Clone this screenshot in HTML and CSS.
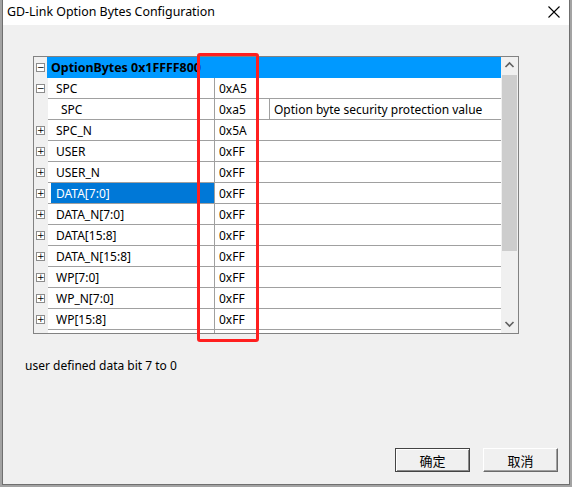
FILE: index.html
```html
<!DOCTYPE html>
<html>
<head>
<meta charset="utf-8">
<title>GD-Link Option Bytes Configuration</title>
<link rel="stylesheet" href="styles.css">
</head>
<body>

<div class="window">
  <div class="titlebar">
    <span class="title">GD-Link Option Bytes Configuration</span>
    <svg class="close" width="12" height="12" viewBox="0 0 12 12">
      <path d="M0.5 0.5 L11.5 11.5 M11.5 0.5 L0.5 11.5" stroke="#000" stroke-width="1.1" fill="none"/>
    </svg>
  </div>

  <div class="client">
    <div class="grid">
      <div class="rows">
        <div class="row">
          <div class="gut"><span class="box">&minus;</span></div>
          <div class="cells head">OptionBytes 0x1FFFF800</div>
        </div>
        <div class="row">
          <div class="gut"><span class="box">&minus;</span></div>
          <div class="cells">
            <div class="name">SPC</div>
            <div class="val wide">0xA5</div>
          </div>
        </div>
        <div class="row">
          <div class="gut"></div>
          <div class="cells">
            <div class="name sub">SPC</div>
            <div class="val">0xa5</div>
            <div class="desc">Option byte security protection value</div>
          </div>
        </div>
        <div class="row">
          <div class="gut"><span class="box">+</span></div>
          <div class="cells"><div class="name">SPC_N</div><div class="val wide">0x5A</div></div>
        </div>
        <div class="row">
          <div class="gut"><span class="box">+</span></div>
          <div class="cells"><div class="name">USER</div><div class="val wide">0xFF</div></div>
        </div>
        <div class="row">
          <div class="gut"><span class="box">+</span></div>
          <div class="cells"><div class="name">USER_N</div><div class="val wide">0xFF</div></div>
        </div>
        <div class="row">
          <div class="gut"><span class="box">+</span></div>
          <div class="cells"><div class="name selected">DATA[7:0]</div><div class="val wide">0xFF</div></div>
        </div>
        <div class="row">
          <div class="gut"><span class="box">+</span></div>
          <div class="cells"><div class="name">DATA_N[7:0]</div><div class="val wide">0xFF</div></div>
        </div>
        <div class="row">
          <div class="gut"><span class="box">+</span></div>
          <div class="cells"><div class="name">DATA[15:8]</div><div class="val wide">0xFF</div></div>
        </div>
        <div class="row">
          <div class="gut"><span class="box">+</span></div>
          <div class="cells"><div class="name">DATA_N[15:8]</div><div class="val wide">0xFF</div></div>
        </div>
        <div class="row">
          <div class="gut"><span class="box">+</span></div>
          <div class="cells"><div class="name">WP[7:0]</div><div class="val wide">0xFF</div></div>
        </div>
        <div class="row">
          <div class="gut"><span class="box">+</span></div>
          <div class="cells"><div class="name">WP_N[7:0]</div><div class="val wide">0xFF</div></div>
        </div>
        <div class="row">
          <div class="gut"><span class="box">+</span></div>
          <div class="cells"><div class="name">WP[15:8]</div><div class="val wide">0xFF</div></div>
        </div>
        <!-- next row, scrolled out of view -->
        <div class="row">
          <div class="gut"></div>
          <div class="cells"><div class="name"></div><div class="val wide"></div></div>
        </div>
      </div>
      <div class="scrollbar">
        <svg class="arrow" width="17" height="17" viewBox="0 0 17 17">
          <path d="M4.5 10 L8.5 6 L12.5 10" stroke="#606060" stroke-width="1.6" fill="none"/>
        </svg>
        <div class="track"><div class="thumb"></div></div>
        <svg class="arrow" width="17" height="17" viewBox="0 0 17 17">
          <path d="M4.5 6 L8.5 10 L12.5 6" stroke="#606060" stroke-width="1.6" fill="none"/>
        </svg>
      </div>
    </div>

    <!-- annotation drawn over the value column -->
    <div class="mark"></div>

    <p class="info">user defined data bit 7 to 0</p>

    <div class="buttons">
      <button class="btn default">确定</button>
      <button class="btn">取消</button>
    </div>
  </div>
</div>

</body>
</html>
```

FILE: styles.css
```css
* {box-sizing: border-box;}
body {
    margin: 0;
    background: #a3a3a3;
    font-family: "Noto Sans", "Noto Sans CJK SC", sans-serif;
    font-size: 12px;
    color: #000;
}

.window {
    margin-left: 2px;
    width: 568px;
    height: 485px;
    border: 1px solid #6f6f6f;
    border-top: none;
    background: #f0f0f0;
    display: flex;
    flex-direction: column;
}

.titlebar {
    height: 25px;
    background: #fff;
    display: flex;
    align-items: center;
    padding-left: 4px;
    padding-right: 9px;
}

.title {
    flex: 1;
    font-size: 12.4px;
    padding-bottom: 2px;
}

.close {
    margin-top: -2px;
}

.client {
    flex: 1;
    position: relative;
    padding: 31px 0 0 30px;
    display: flex;
    flex-direction: column;
}

/* property grid */
.grid {
    width: 486px;
    height: 278px;
    border: 1px solid #828282;
    background: #fff;
    display: flex;
}

.rows {
    flex: 1;
    overflow: hidden;
}

.row {
    display: flex;
    height: 21px;
}

.gut {
    width: 14px;
    background: #f0f0f0;
    display: flex;
    align-items: center;
    padding-left: 2px;
    padding-bottom: 1px;
}

.box {
    width: 9px;
    height: 9px;
    border: 1px solid #8c8c8c;
    background: #fff;
    font-family: "DejaVu Sans", sans-serif;
    font-size: 9px;
    line-height: 7px;
    text-align: center;
    overflow: hidden;
}

.cells {
    flex: 1;
    display: flex;
    border-bottom: 1px solid #a0a0a0;
    padding-left: 3px;
    line-height: 19px;
}

.cells.head {
    background: #0099ff;
    border-bottom-color: #0099ff;
    font-weight: bold;
    font-size: 12.4px;
    margin-left: -1px;
    padding-left: 4px;
    padding-top: 1px;
}

.name {
    width: 164px;
    padding-left: 5px;
    padding-top: 1px;
    border-right: 1px solid #a0a0a0;
    white-space: nowrap;
}

.name.sub {
    padding-left: 10px;
}

.name.selected {
    background: #0078d7;
    color: #fff;
}

.val {
    width: 55px;
    padding-left: 4px;
    padding-top: 1px;
    border-right: 1px solid #a0a0a0;
}

.val.wide {
    border-right: none;
}

.desc {
    flex: 1;
    padding-left: 4px;
    padding-top: 1px;
    white-space: nowrap;
}

.scrollbar {
    width: 17px;
    background: #f0f0f0;
    display: flex;
    flex-direction: column;
}

.track {
    flex: 1;
}

.thumb {
    height: 176px;
    margin: 1px 0 0 1px;
    width: 15px;
    background: #cdcdcd;
}

/* red highlight around the value column */
.mark {
    position: absolute;
    left: 194px;
    top: 28px;
    width: 62px;
    height: 289px;
    border: 3px solid #ff1f1f;
    border-radius: 3px;
}

.info {
    margin: 24px 0 0 -8px;
    line-height: 16px;
}

.buttons {
    margin-top: 74px;
    display: flex;
    justify-content: flex-end;
    gap: 13px;
    padding-right: 11px;
}

.btn {
    width: 75px;
    height: 24px;
    background: #f0f0f0;
    border: 1px solid;
    border-color: #fff #6a6a6a #6a6a6a #fff;
    box-shadow: inset -1px -1px 0 #a0a0a0;
    font-family: "Noto Sans CJK SC", sans-serif;
    font-size: 13px;
    color: #000;
    padding: 0;
}

.btn.default {
    border: 1px solid #444;
    box-shadow: inset 1px 1px 0 #fff, inset -1px -1px 0 #8a8a8a;
}
```
